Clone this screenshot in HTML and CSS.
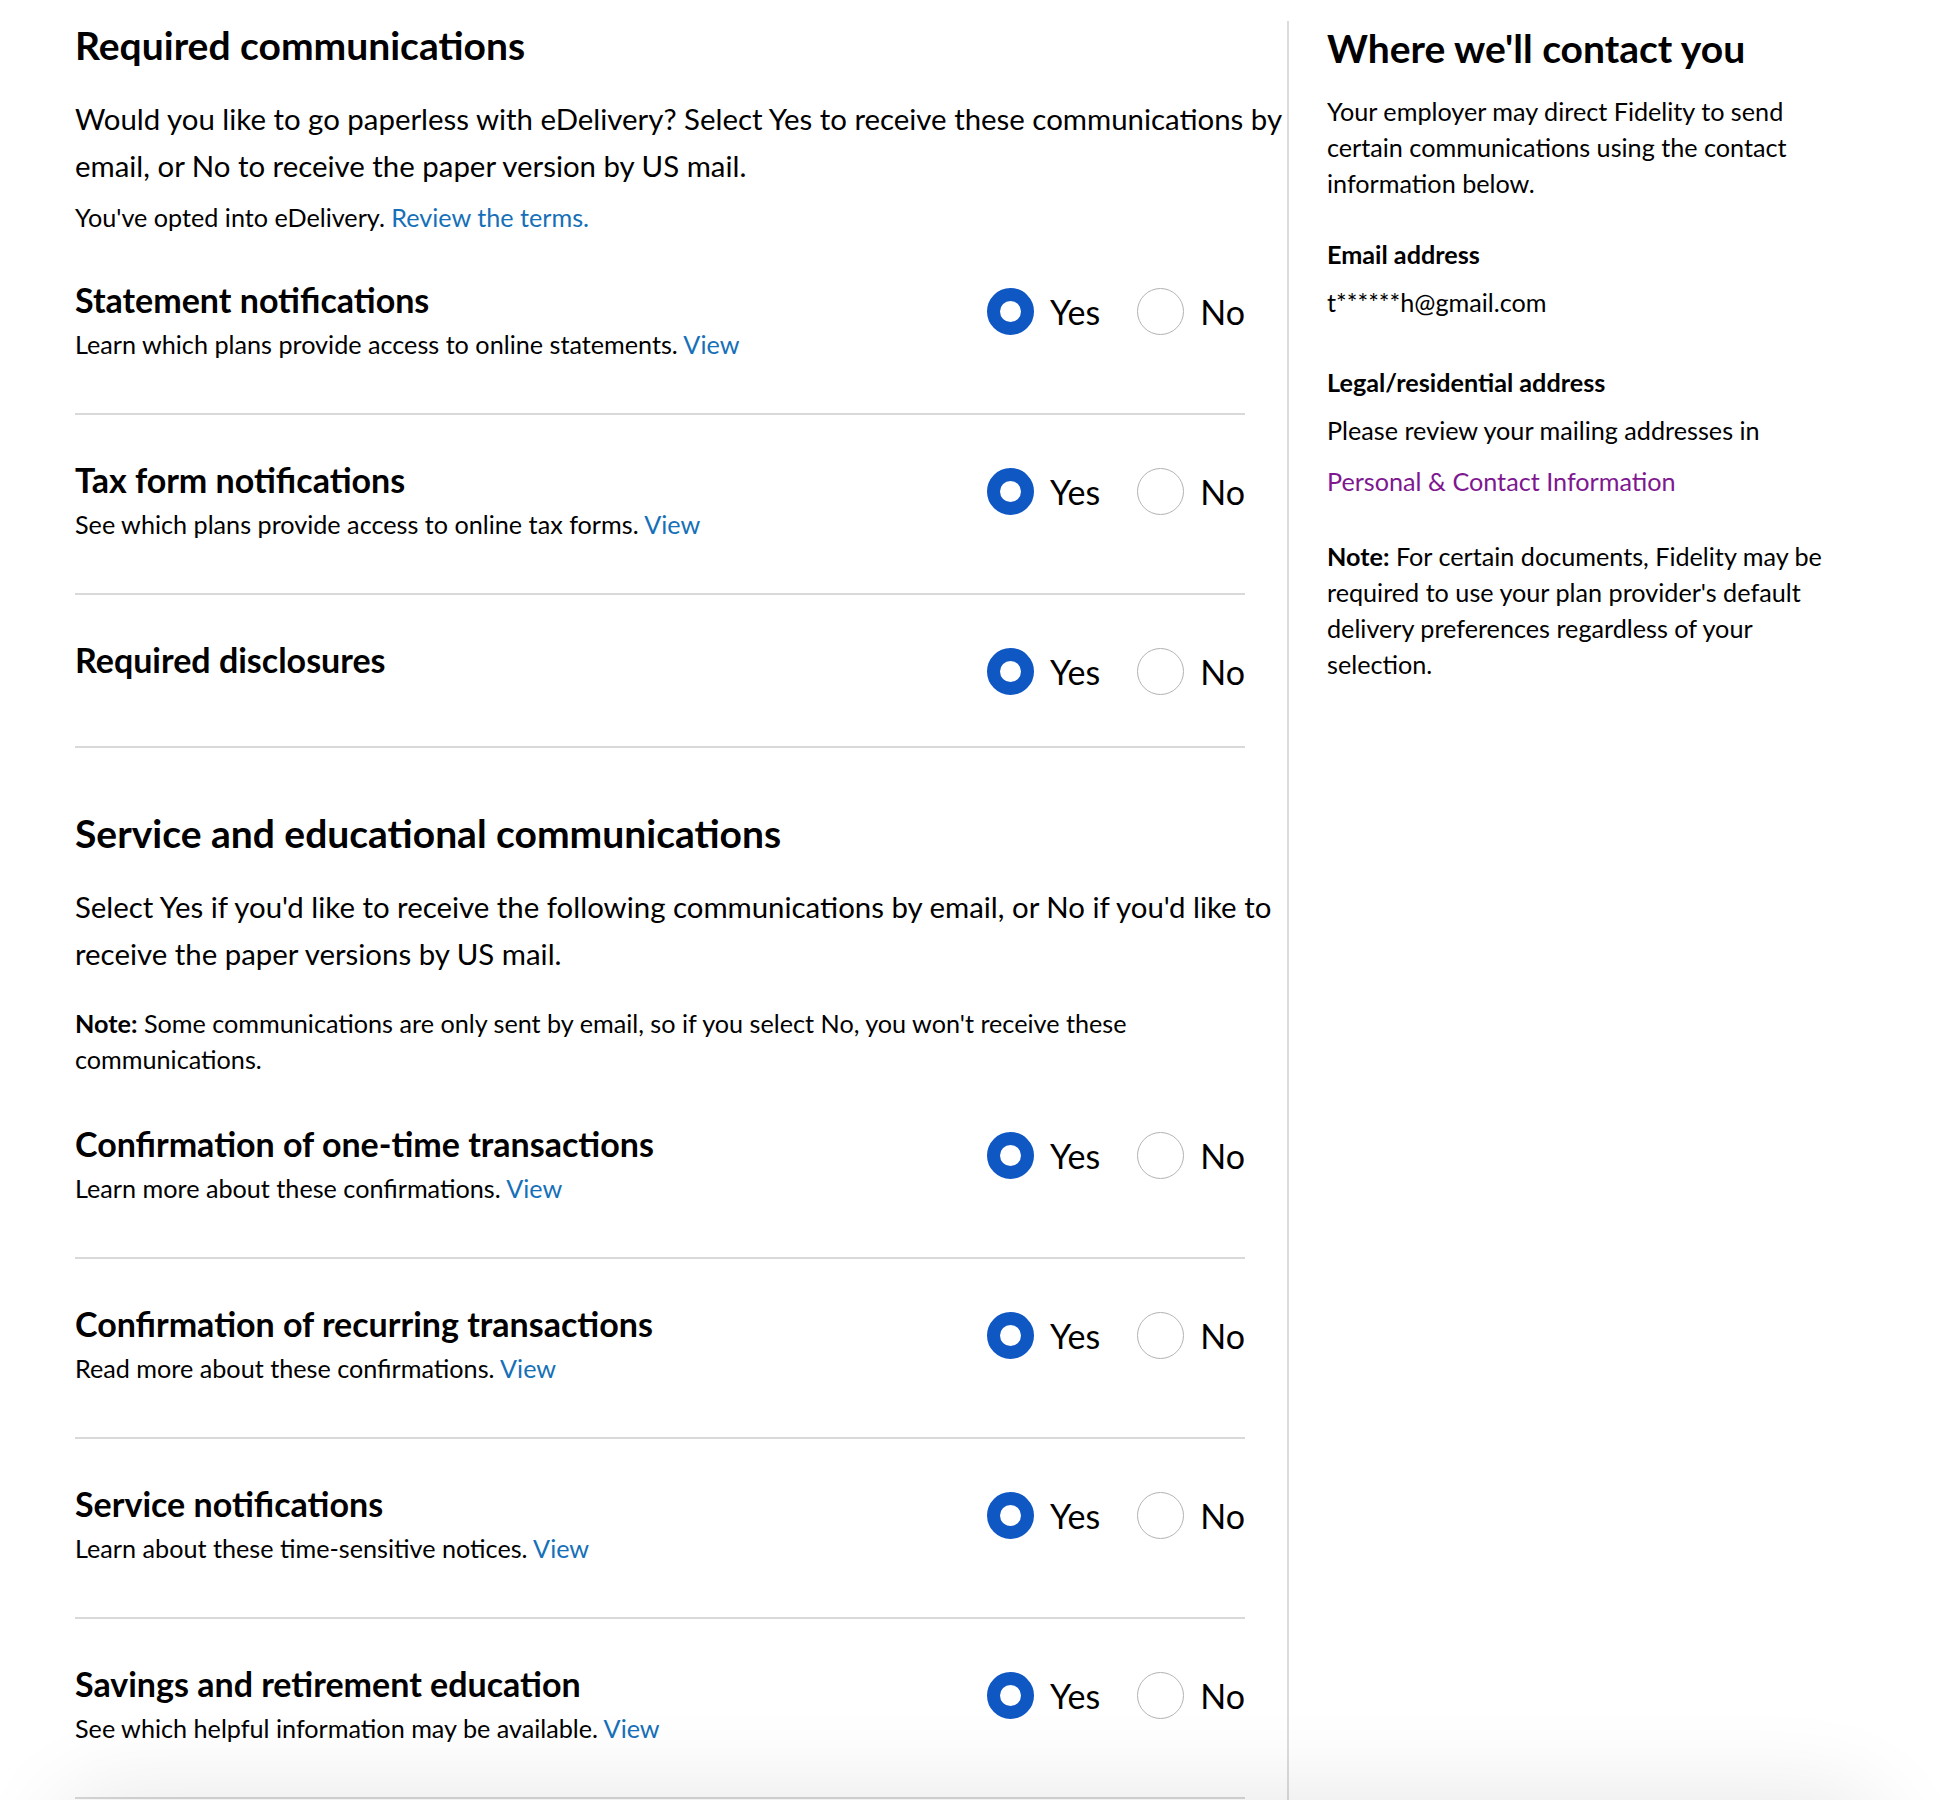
FILE: index.html
```html
<!DOCTYPE html>
<html lang="en">
<head>
<meta charset="utf-8">
<title>Delivery preferences</title>
<link rel="stylesheet" href="styles.css">
</head>
<body>
<div class="page">
  <main class="main">
    <section class="group">
      <h2 class="section-title">Required communications</h2>
      <p class="lead">Would you like to go paperless with eDelivery? Select Yes to receive these communications by email, or No to receive the paper version by US mail.</p>
      <p class="small opted">You've opted into eDelivery. <a class="link" href="#">Review the terms.</a></p>

      <div class="row first">
        <div class="row-text">
          <h3 class="row-title">Statement notifications</h3>
          <p class="small desc">Learn which plans provide access to online statements. <a class="link" href="#">View</a></p>
        </div>
        <div class="choices">
          <label class="choice"><span class="radio on"></span><span class="choice-label">Yes</span></label>
          <label class="choice"><span class="radio"></span><span class="choice-label">No</span></label>
        </div>
      </div>

      <div class="row">
        <div class="row-text">
          <h3 class="row-title">Tax form notifications</h3>
          <p class="small desc">See which plans provide access to online tax forms. <a class="link" href="#">View</a></p>
        </div>
        <div class="choices">
          <label class="choice"><span class="radio on"></span><span class="choice-label">Yes</span></label>
          <label class="choice"><span class="radio"></span><span class="choice-label">No</span></label>
        </div>
      </div>

      <div class="row">
        <div class="row-text">
          <h3 class="row-title">Required disclosures</h3>
        </div>
        <div class="choices">
          <label class="choice"><span class="radio on"></span><span class="choice-label">Yes</span></label>
          <label class="choice"><span class="radio"></span><span class="choice-label">No</span></label>
        </div>
      </div>
    </section>

    <section class="group second">
      <h2 class="section-title">Service and educational communications</h2>
      <p class="lead">Select Yes if you'd like to receive the following communications by email, or No if you'd like to receive the paper versions by US mail.</p>
      <p class="small note"><strong>Note:</strong> Some communications are only sent by email, so if you select No, you won't receive these communications.</p>

      <div class="row first">
        <div class="row-text">
          <h3 class="row-title">Confirmation of one-time transactions</h3>
          <p class="small desc">Learn more about these confirmations. <a class="link" href="#">View</a></p>
        </div>
        <div class="choices">
          <label class="choice"><span class="radio on"></span><span class="choice-label">Yes</span></label>
          <label class="choice"><span class="radio"></span><span class="choice-label">No</span></label>
        </div>
      </div>

      <div class="row">
        <div class="row-text">
          <h3 class="row-title">Confirmation of recurring transactions</h3>
          <p class="small desc">Read more about these confirmations. <a class="link" href="#">View</a></p>
        </div>
        <div class="choices">
          <label class="choice"><span class="radio on"></span><span class="choice-label">Yes</span></label>
          <label class="choice"><span class="radio"></span><span class="choice-label">No</span></label>
        </div>
      </div>

      <div class="row">
        <div class="row-text">
          <h3 class="row-title">Service notifications</h3>
          <p class="small desc">Learn about these time-sensitive notices. <a class="link" href="#">View</a></p>
        </div>
        <div class="choices">
          <label class="choice"><span class="radio on"></span><span class="choice-label">Yes</span></label>
          <label class="choice"><span class="radio"></span><span class="choice-label">No</span></label>
        </div>
      </div>

      <div class="row">
        <div class="row-text">
          <h3 class="row-title">Savings and retirement education</h3>
          <p class="small desc">See which helpful information may be available. <a class="link" href="#">View</a></p>
        </div>
        <div class="choices">
          <label class="choice"><span class="radio on"></span><span class="choice-label">Yes</span></label>
          <label class="choice"><span class="radio"></span><span class="choice-label">No</span></label>
        </div>
      </div>
    </section>
  </main>

  <aside class="aside">
    <h2 class="section-title aside-title">Where we'll contact you</h2>
    <p class="small aside-intro">Your employer may direct Fidelity to send certain communications using the contact information below.</p>
    <h4 class="label email-label">Email address</h4>
    <p class="small value">t******h@gmail.com</p>
    <h4 class="label legal-label">Legal/residential address</h4>
    <p class="small value">Please review your mailing addresses in</p>
    <p class="small value contact-link"><a class="link purple" href="#">Personal &amp; Contact Information</a></p>
    <p class="small aside-note"><strong>Note:</strong> For certain documents, Fidelity may be required to use your plan provider's default delivery preferences regardless of your selection.</p>
  </aside>
</div>
<div class="bottom-shade"></div>
</body>
</html>
```

FILE: styles.css
```css
html, body {
  margin: 0;
  padding: 0;
  background: #ffffff;
}

body {
  font-family: "Lato", "Open Sans", sans-serif;
  color: #000000;
  overflow: hidden;
  height: 1800px;
}

.page {
  display: flex;
  align-items: flex-start;
  padding-left: 75px;
}

.main {
  width: 1212px;
  flex: none;
  padding-top: 24px;
}

.section-title {
  margin: 0;
  font-size: 39px;
  line-height: 43px;
  font-weight: 700;
}

.lead {
  margin: 28px 0 0;
  font-size: 29.4px;
  line-height: 47px;
}

.small {
  font-size: 25.2px;
  line-height: 36px;
  margin: 0;
}

.opted {
  margin-top: 10px;
}

.link {
  color: #1670b8;
  text-decoration: none;
}

.link.purple {
  color: #7e1790;
}

.row {
  display: flex;
  justify-content: space-between;
  align-items: flex-start;
  width: 1170px;
  padding: 43px 0 51px;
  border-bottom: 2px solid #d9d9d9;
}

.row.first {
  margin-top: 2px;
}

.opted + .row.first {
  margin-top: 0;
}

.row-title {
  margin: 0;
  font-size: 34px;
  line-height: 43px;
  font-weight: 700;
}

.desc {
  margin-top: 5px;
}

.choices {
  display: flex;
  align-items: center;
  margin-top: 10px;
}

.choice {
  display: flex;
  align-items: center;
  cursor: pointer;
}

.choice + .choice {
  margin-left: 37px;
}

.radio {
  box-sizing: border-box;
  width: 47px;
  height: 47px;
  border-radius: 50%;
  border: 1.5px solid #b3b3b3;
  background: #ffffff;
  flex: none;
}

.radio.on {
  border: 13px solid #0f57c3;
}

.choice-label {
  margin-left: 16px;
  font-size: 34px;
  line-height: 47px;
}

.second {
  margin-top: 64px;
}

.note {
  margin-top: 28px;
}

.aside {
  flex: none;
  width: 510px;
  margin-top: 21px;
  min-height: 1779px;
  border-left: 2px solid #dcdcdc;
  padding-left: 38px;
  padding-top: 6px;
}

.aside-intro {
  margin-top: 23px;
}

.label {
  margin: 0;
  font-size: 25.2px;
  line-height: 36px;
  font-weight: 700;
}

.email-label {
  margin-top: 35px;
}

.value {
  margin-top: 12px;
}

.legal-label {
  margin-top: 44px;
}

.contact-link {
  margin-top: 15px;
}

.aside-note {
  margin-top: 39px;
}

.bottom-shade {
  position: fixed;
  left: 60px;
  right: 60px;
  top: 1800px;
  height: 120px;
  border-radius: 60px;
  box-shadow: 0 0 90px 10px rgba(0, 0, 0, 0.09);
  pointer-events: none;
}
```
